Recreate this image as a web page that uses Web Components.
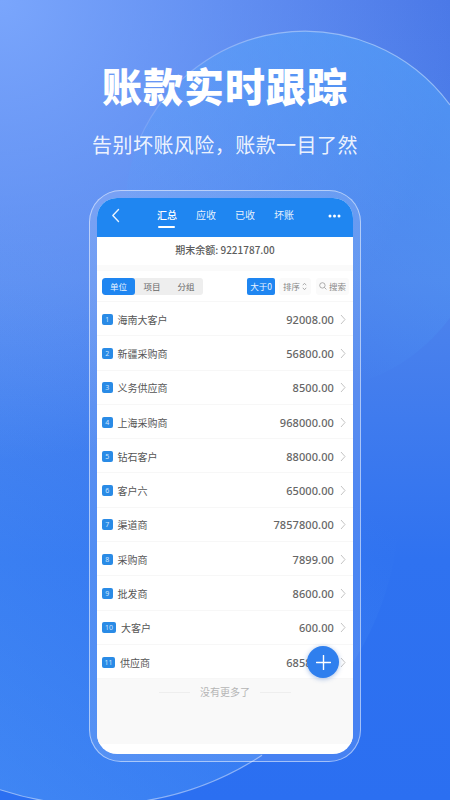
<!DOCTYPE html>
<html lang="zh-CN"><head><meta charset="utf-8"><title>账款实时跟踪</title>
<style>html,body{margin:0;padding:0;width:450px;height:800px;overflow:hidden}</style></head>
<body>
<poster-page>
  <span slot="title">账款实时跟踪</span>
  <span slot="subtitle">告别坏账风险，账款一目了然</span>
  <phone-frame>
    <app-header></app-header>
    <balance-bar>期末余额: 9221787.00</balance-bar>
    <filter-bar></filter-bar>
    <ledger-row index="1" name="海南大客户" amount="92008.00"></ledger-row>
    <ledger-row index="2" name="新疆采购商" amount="56800.00"></ledger-row>
    <ledger-row index="3" name="义务供应商" amount="8500.00"></ledger-row>
    <ledger-row index="4" name="上海采购商" amount="968000.00"></ledger-row>
    <ledger-row index="5" name="钻石客户" amount="88000.00"></ledger-row>
    <ledger-row index="6" name="客户六" amount="65000.00"></ledger-row>
    <ledger-row index="7" name="渠道商" amount="7857800.00"></ledger-row>
    <ledger-row index="8" name="采购商" amount="7899.00"></ledger-row>
    <ledger-row index="9" name="批发商" amount="8600.00"></ledger-row>
    <ledger-row index="10" name="大客户" amount="600.00"></ledger-row>
    <ledger-row index="11" name="供应商" amount="68580.00"></ledger-row>
    <end-note>没有更多了</end-note>
    <fab-button slot="overlay"></fab-button>
  </phone-frame>
</poster-page>
<script>
const FONT = '"Noto Sans CJK SC","Noto Sans",sans-serif';
function def(name, html){
  customElements.define(name, class extends HTMLElement{
    connectedCallback(){
      if(this.shadowRoot) return;
      const r=this.attachShadow({mode:'open'});
      r.innerHTML=typeof html==='function'?html(this):html;
    }
  });
}
def('poster-page',`<style>
:host{display:flex;flex-direction:column;align-items:center;position:relative;width:450px;height:800px;overflow:hidden;box-sizing:border-box;font-family:${FONT};
background:radial-gradient(circle at 0 0,#7aa6fc 0,rgba(122,166,252,0) 50%),linear-gradient(180deg,#4a78e7 0,#4f84ec 35%,#2f72f0 70%,#2b6ff1 100%)}
svg{position:absolute;left:0;top:0}
h1{position:relative;margin:0;padding-top:57px;height:56px;line-height:56px;font-size:40px;font-weight:900;letter-spacing:1px;color:#fff;white-space:nowrap}
h2{position:relative;margin:0;padding-top:18px;height:28px;line-height:28px;font-size:20px;font-weight:400;letter-spacing:.45px;color:rgba(255,255,255,.9);white-space:nowrap}
.ph{position:relative;margin-top:31px}
</style>
<svg width="450" height="800" viewBox="0 0 450 800" aria-hidden="true">
<defs>
<linearGradient id="a" gradientUnits="userSpaceOnUse" x1="135" y1="0" x2="450" y2="0"><stop offset="0" stop-color="#fff" stop-opacity=".1"/><stop offset=".4" stop-color="#fff" stop-opacity=".35"/><stop offset="1" stop-color="#fff" stop-opacity=".4"/></linearGradient>
<linearGradient id="f" gradientUnits="userSpaceOnUse" x1="420" y1="60" x2="220" y2="400"><stop offset="0" stop-color="#52a5fb" stop-opacity=".55"/><stop offset=".8" stop-color="#52a5fb" stop-opacity="0"/></linearGradient>
<linearGradient id="g" gradientUnits="userSpaceOnUse" x1="0" y1="800" x2="300" y2="450"><stop offset="0" stop-color="#5ea8f8" stop-opacity=".4"/><stop offset="1" stop-color="#5ea8f8" stop-opacity="0"/></linearGradient>
</defs>
<circle cx="305" cy="211" r="180" fill="url(#f)"/>
<circle cx="95" cy="500" r="305" fill="url(#g)"/>
<path d="M135 151A180 180 0 0 1 450 105" fill="none" stroke="url(#a)" stroke-width="1.2"/>
<path d="M0 789.7A305 305 0 0 0 262 755.3" fill="none" stroke="#fff" stroke-opacity=".45" stroke-width="1.2"/>
</svg>
<h1><slot name="title"></slot></h1>
<h2><slot name="subtitle"></slot></h2>
<div class="ph"><slot></slot></div>`);

def('phone-frame',`<style>
:host{display:block;width:272px;height:572px;box-sizing:border-box;padding:7px;border:1.5px solid rgba(255,255,255,.5);border-radius:32px;background:rgba(255,255,255,.13);position:relative}
.s{height:100%;border-radius:20px;overflow:hidden;background:#fff;display:flex;flex-direction:column;position:relative}
.o{position:absolute;inset:0;pointer-events:none}
</style><div class="s"><slot></slot><div class="o"><slot name="overlay"></slot></div></div>`);

def('app-header',`<style>
:host{display:flex;flex:none;align-items:center;height:39px;background:#1f86f1;color:rgba(255,255,255,.9);position:relative;font-size:10px;box-sizing:border-box}
.b{flex:none;width:60px;padding-left:14px;box-sizing:border-box;display:flex}
.t{display:flex;gap:19px;flex:1}
.t span{display:block;width:20px;line-height:14px;text-align:center;position:relative;white-space:nowrap;margin-top:-6px}
.t .on{color:#fff;font-weight:500}
.t .on::after{content:"";position:absolute;left:1px;right:2px;top:18px;height:2px;border-radius:1px;background:#fff}
.m{flex:none;width:25px;display:flex}
</style>
<div class="b"><svg width="9" height="15" viewBox="0 0 9 15" style="margin-top:-4px"><path d="M7.5 1.5 1.8 7.5l5.7 6" fill="none" stroke="#e6f2ff" stroke-width="1.4" stroke-linecap="round" stroke-linejoin="round"/></svg></div>
<div class="t"><span class="on">汇总</span><span>应收</span><span>已收</span><span>坏账</span></div>
<div class="m"><svg width="13" height="4" viewBox="0 0 13 4" style="margin-top:-4px"><circle cx="2" cy="2" r="1.5" fill="#fff"/><circle cx="6.5" cy="2" r="1.5" fill="#fff"/><circle cx="11" cy="2" r="1.5" fill="#fff"/></svg></div>`);

def('balance-bar',`<style>
:host{display:block;flex:none;height:28px;line-height:26px;text-align:center;font-size:10px;font-weight:500;color:#5c5c5c;background:#fff;border-bottom:6px solid #fafafa;font-family:${FONT}}
</style><slot></slot>`);

def('filter-bar',`<style>
:host{display:flex;flex:none;align-items:center;height:31px;padding:0 4px 0 5px;box-sizing:border-box;background:#fff;border-bottom:1px solid #f7f7f7;font-size:8.5px;color:#666}
.seg{display:flex;width:101px;height:17px;background:#eee;border-radius:3px;overflow:hidden;line-height:17px;text-align:center}
.seg span{flex:1}
.seg .on{flex:none;width:33px;background:#1f86f1;color:#e8f3ff;border-radius:3px}
.gt{margin-left:44px;width:28px;height:17px;line-height:17px;text-align:center;background:#1f86f1;color:#eaf4ff;border-radius:2px}
.c{display:flex;align-items:center;justify-content:center;height:17px;background:#fafafa;color:#888;border-radius:3px;gap:2px}
.so{margin-left:4px;width:32px}
.se{margin-left:5px;width:33px}
</style>
<div class="seg"><span class="on">单位</span><span>项目</span><span>分组</span></div>
<div class="gt">大于0</div>
<div class="c so">排序<svg width="5" height="9" viewBox="0 0 5 9"><path d="M.8 3.2 2.5 1.3l1.7 1.9M.8 5.8l1.7 1.9 1.7-1.9" fill="none" stroke="#999" stroke-width=".8"/></svg></div>
<div class="c se"><svg width="8" height="8" viewBox="0 0 8 8"><circle cx="3.4" cy="3.4" r="2.7" fill="none" stroke="#999" stroke-width=".8"/><path d="M5.4 5.4 7.4 7.4" stroke="#999" stroke-width=".8"/></svg>搜索</div>`);

def('ledger-row',el=>{const ix=el.getAttribute('index');return `<style>
:host{display:flex;flex:none;align-items:center;height:34.3px;box-sizing:border-box;padding:1px 7px 0 5px;background:#fff;border-bottom:1px solid #f7f7f7;font-family:${FONT}}
.i{flex:none;min-width:10.5px;height:11px;padding:0 ${ix==='10'?'3px':ix==='11'?'2.5px':'0'};box-sizing:border-box;line-height:11px;text-align:center;font-size:7px;color:#cfe6ff;background:#2a8be6;border-radius:2px;font-family:"Noto Sans",sans-serif}
.n{margin-left:5px;font-size:10px;color:#555;flex:1;white-space:nowrap}
.a{font-size:11px;font-weight:500;color:#666;font-family:"Noto Sans",sans-serif;white-space:nowrap;letter-spacing:.1px}
svg{flex:none;margin-left:6px}
</style><span class="i">${ix}</span><span class="n">${el.getAttribute('name')}</span><span class="a">${el.getAttribute('amount')}</span>
<svg width="6" height="11" viewBox="0 0 6 11"><path d="M1 1l4 4.5L1 10" fill="none" stroke="#c4c4c4" stroke-width="1"/></svg>`});

def('end-note',`<style>
:host{display:flex;flex:1;justify-content:center;gap:10px;padding-top:5px;margin-bottom:10px;height:64px;box-sizing:border-box;background:#f9f9f9;color:#b5b5b5;font-size:10px;line-height:16px;font-family:${FONT}}
i{display:block;width:31px;height:1px;background:#eee;margin-top:8px}
</style><i></i><slot></slot><i></i>`);

def('fab-button',`<style>
:host{position:absolute;left:210px;top:448px;width:32px;height:32px;border-radius:50%;background:#2f7fee;box-shadow:0 1px 5px rgba(30,90,190,.4);display:flex;align-items:center;justify-content:center}
</style><svg width="15" height="15" viewBox="0 0 15 15"><path d="M7.5 .5v14M.5 7.5h14" stroke="#fff" stroke-width="1.4" stroke-linecap="round"/></svg>`);
</script>
</body></html>
